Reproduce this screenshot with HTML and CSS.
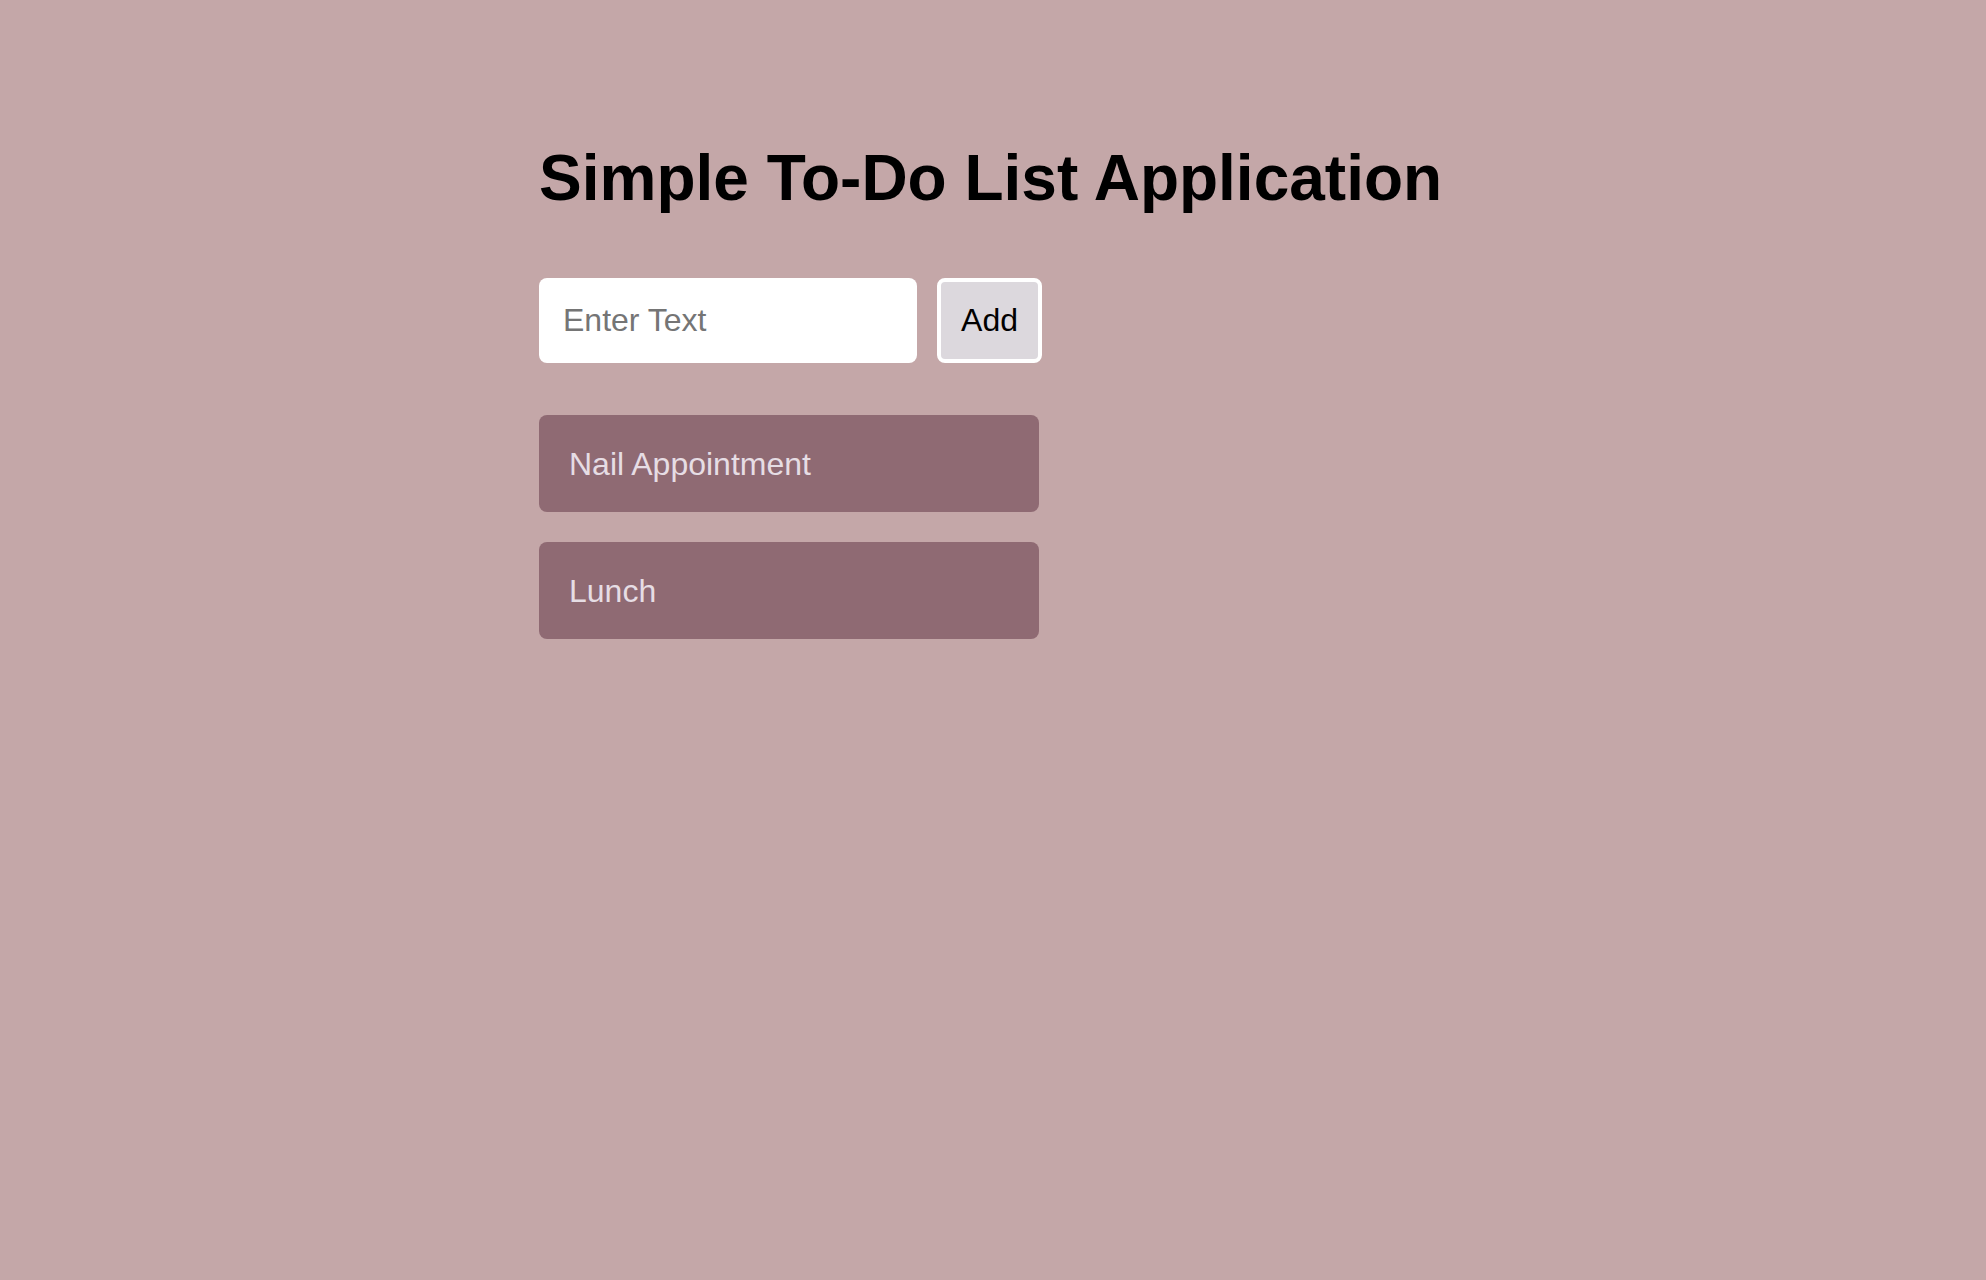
FILE: index.html
```html
<!DOCTYPE html>
<html lang="en">
<head>
<meta charset="utf-8">
<title>Simple To-Do List Application</title>
<link rel="stylesheet" href="styles.css">
</head>
<body>
<main class="container">
  <h1 class="title">Simple To-Do List Application</h1>
  <form class="add-form">
    <input class="text-input" type="text" placeholder="Enter Text">
    <button class="add-btn" type="button">Add</button>
  </form>
  <ul class="todo-list">
    <li class="todo-item">Nail Appointment</li>
    <li class="todo-item">Lunch</li>
  </ul>
</main>
</body>
</html>
```
FILE: styles.css
```css
html, body {
  margin: 0;
  padding: 0;
}
body {
  background: #c4a7a8;
  font-family: "Liberation Sans", Arial, Helvetica, sans-serif;
  min-height: 1280px;
}
.container {
  width: 908px;
  margin: 0 auto;
  padding-top: 141px;
}
.title {
  margin: 0 0 63px;
  font-size: 64px;
  font-weight: 700;
  line-height: normal;
  color: #000;
}
.add-form {
  display: flex;
  gap: 20px;
  margin: 0;
}
.text-input {
  box-sizing: border-box;
  width: 378px;
  height: 85px;
  border: none;
  border-radius: 8px;
  padding: 0 24px;
  font-family: inherit;
  font-size: 32px;
  background: #fff;
  color: #000;
  outline: none;
}
.text-input::placeholder {
  color: #757575;
}
.add-btn {
  box-sizing: border-box;
  width: 105px;
  height: 85px;
  border: 4px solid #fff;
  border-radius: 8px;
  background: #dcd8dd;
  font-family: inherit;
  font-size: 32px;
  color: #000;
  padding: 0;
}
.todo-list {
  list-style: none;
  margin: 52px 0 0;
  padding: 0;
  display: flex;
  flex-direction: column;
  gap: 30px;
}
.todo-item {
  box-sizing: border-box;
  width: 500px;
  height: 97px;
  border-radius: 8px;
  background: #8f6a73;
  color: #e6dde4;
  font-size: 32px;
  padding: 2px 0 0 30px;
  display: flex;
  align-items: center;
}
```
